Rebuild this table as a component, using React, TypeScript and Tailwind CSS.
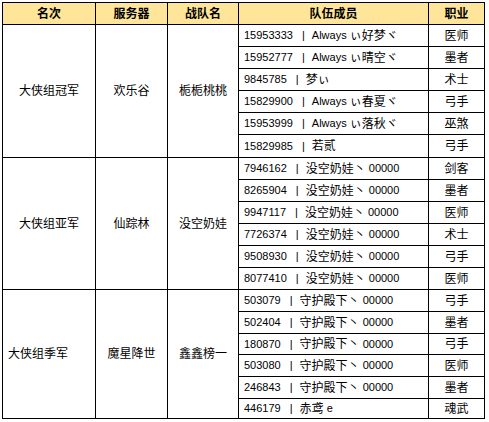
import React from 'react';

type Member = { id: string; name: string; job: string };
type Group = { rank: string; server: string; team: string; leftRank?: boolean; members: Member[] };

const groups: Group[] = [
  {
    rank: '大侠组冠军',
    server: '欢乐谷',
    team: '栀栀桃桃',
    members: [
      { id: '15953333', name: 'Always ぃ好梦ヾ', job: '医师' },
      { id: '15952777', name: 'Always ぃ晴空ヾ', job: '墨者' },
      { id: '9845785', name: '梦ぃ', job: '术士' },
      { id: '15829900', name: 'Always ぃ春夏ヾ', job: '弓手' },
      { id: '15953999', name: 'Always ぃ落秋ヾ', job: '巫煞' },
      { id: '15829985', name: '若贰', job: '弓手' },
    ],
  },
  {
    rank: '大侠组亚军',
    server: '仙踪林',
    team: '没空奶娃',
    members: [
      { id: '7946162', name: '没空奶娃丶 00000', job: '剑客' },
      { id: '8265904', name: '没空奶娃丶 00000', job: '墨者' },
      { id: '9947117', name: '没空奶娃丶 00000', job: '医师' },
      { id: '7726374', name: '没空奶娃丶 00000', job: '术士' },
      { id: '9508930', name: '没空奶娃丶 00000', job: '弓手' },
      { id: '8077410', name: '没空奶娃丶 00000', job: '医师' },
    ],
  },
  {
    rank: '大侠组季军',
    server: '魔星降世',
    team: '鑫鑫榜一',
    leftRank: true,
    members: [
      { id: '503079', name: '守护殿下丶 00000', job: '弓手' },
      { id: '502404', name: '守护殿下丶 00000', job: '墨者' },
      { id: '180870', name: '守护殿下丶 00000', job: '弓手' },
      { id: '503080', name: '守护殿下丶 00000', job: '医师' },
      { id: '246843', name: '守护殿下丶 00000', job: '墨者' },
      { id: '446179', name: '赤鸢 e', job: '魂武' },
    ],
  },
];

// CJK runs get 12px, latin/digits 11px so the widths come close to the bitmap font
function Mixed({ text }: { text: string }) {
  const parts = text.split(/([\u3000-\u30ff\u4e00-\u9fff\uff00-\uffef]+)/).filter(Boolean);
  return (
    <>
      {parts.map((p, i) =>
        /[\u3000-\u30ff\u4e00-\u9fff\uff00-\uffef]/.test(p) ? (
          <span key={i} className="text-[12px]">{p}</span>
        ) : (
          <span key={i} className="text-[11px] whitespace-pre">{p}</span>
        )
      )}
    </>
  );
}

const headers = ['名次', '服务器', '战队名', '队伍成员', '职业'];

export default function App() {
  return (
    <div className="min-h-screen bg-white pt-[2px] pl-[2px] text-black font-['Liberation_Sans','Noto_Sans_CJK_SC',sans-serif]">
      <div className="grid w-fit grid-cols-[92px_71px_70px_189px_55px] grid-rows-[21px_21px_21px_21px_21px_21px_22px_21px_21px_21px_21px_21px_21px_21px_21px_20px_21px_21px_19px] gap-px bg-black p-px">
        {headers.map((h) => (
          <div key={h} className="flex items-center justify-center bg-[#FFE599] text-[12px] font-bold leading-none">
            {h}
          </div>
        ))}
        {groups.map((g) => (
          <React.Fragment key={g.rank}>
            <div
              className={`row-span-6 flex items-center bg-white text-[12px] ${
                g.leftRank ? 'justify-start pl-[5px]' : 'justify-center'
              }`}
            >
              {g.rank}
            </div>
            <div className="row-span-6 flex items-center justify-center bg-white text-[12px]">{g.server}</div>
            <div className="row-span-6 flex items-center justify-center bg-white text-[12px]">{g.team}</div>
            {g.members.map((m) => (
              <React.Fragment key={m.id}>
                <div className="flex items-center whitespace-nowrap bg-white pl-[5px] leading-none">
                  <span className="text-[11px]">{m.id}</span>
                  <span className="ml-[9px] mr-[7px] text-[11px]">|</span>
                  <Mixed text={m.name} />
                </div>
                <div className="flex items-center justify-center bg-white text-[12px]">{m.job}</div>
              </React.Fragment>
            ))}
          </React.Fragment>
        ))}
      </div>
    </div>
  );
}
